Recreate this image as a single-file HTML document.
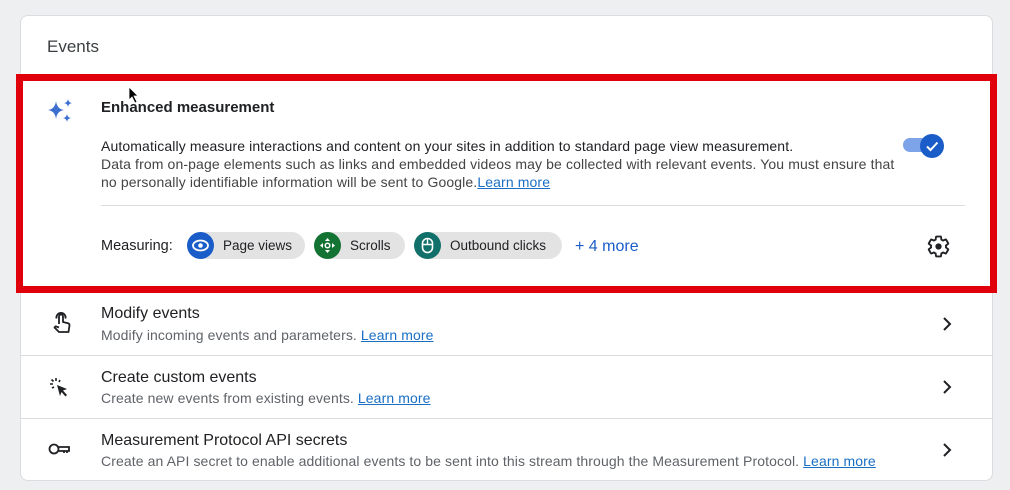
<!DOCTYPE html>
<html><head><style>
*{margin:0;padding:0;box-sizing:border-box}
body{width:1010px;height:490px;background:#eeeff0;font-family:"Liberation Sans",Arial,sans-serif;position:relative;overflow:hidden;color:#202124}
.card{position:absolute;left:20px;top:15px;width:973px;height:466px;background:#fff;border:1px solid #dadce0;border-radius:8px}
.t{position:absolute;white-space:nowrap}
.red{position:absolute;left:16px;top:74px;width:981px;height:219px;border:7px solid #e0000b;background:#fff}
.hr{position:absolute;height:1px;background:#dadce0}
.chip{position:absolute;top:232px;height:27px;border-radius:14px;background:#e3e3e3;font-size:13px;color:#202124}
.chip .ic{position:absolute;left:0;top:0;width:27px;height:27px;border-radius:50%}
.chip span{position:absolute;top:6px}
a{color:#1a6fc4;text-decoration:underline}
.ttl{font-size:16px;color:#202124}
.sub{font-size:14px;color:#5f6368;letter-spacing:0.1px}
.d{font-size:14px;letter-spacing:0.12px}
</style></head><body>
<div class="card"></div>
<div class="t" style="left:47px;top:37px;font-size:17px;color:#3c4043">Events</div>
<div class="red"></div>
<svg class="t" style="left:47px;top:98px" width="28" height="28" viewBox="0 0 28 28"><path d="M9 3 Q10 11 17 12 Q10 13 9 21 Q8 13 1 12 Q8 11 9 3Z" fill="#3c6fd0"/><path d="M21 1 Q21.5 4.5 25 5 Q21.5 5.5 21 9 Q20.5 5.5 17 5 Q20.5 4.5 21 1Z" fill="#3c6fd0"/><path d="M20 16 Q20.5 19.5 24 20 Q20.5 20.5 20 24 Q19.5 20.5 16 20 Q19.5 19.5 20 16Z" fill="#3c6fd0"/></svg>
<div class="t" style="left:101px;top:99px;font-size:15px;font-weight:bold;color:#202124">Enhanced measurement</div>
<div class="t d" style="left:101px;top:138px;color:#202124">Automatically measure interactions and content on your sites in addition to standard page view measurement.</div>
<div class="t d" style="left:101px;top:156px;color:#444">Data from on-page elements such as links and embedded videos may be collected with relevant events. You must ensure that</div>
<div class="t d" style="left:101px;top:174px;color:#444">no personally identifiable information will be sent to Google.<a>Learn more</a></div>
<div class="t" style="left:903px;top:138px;width:34px;height:14px;border-radius:7px;background:#7da4e8"></div>
<div class="t" style="left:920px;top:134px;width:24px;height:24px;border-radius:50%;background:#1a5dc8"></div>
<svg class="t" style="left:920px;top:134px" width="24" height="24"><path d="M7 12.5 L10.5 16 L17.5 8.5" stroke="#fff" stroke-width="2" fill="none"/></svg>
<div class="hr" style="left:101px;top:205px;width:864px"></div>
<div class="t" style="left:101px;top:238px;font-size:14.5px">Measuring:</div>
<div class="chip" style="left:187px;width:118px"><div class="ic" style="background:#1a5dc8"></div>
<svg class="t" style="left:4px;top:6px" width="19" height="15"><ellipse cx="9.5" cy="7.5" rx="7.5" ry="5" stroke="#fff" stroke-width="1.8" fill="none"/><circle cx="9.5" cy="7.5" r="2.3" fill="#fff"/></svg><span style="left:36px;font-size:13.5px">Page views</span></div>
<div class="chip" style="left:314px;width:91px"><div class="ic" style="background:#137333"></div>
<svg class="t" style="left:5px;top:5px" width="17" height="17"><path d="M8.5 1 L11 4 H6Z M8.5 16 L11 13 H6Z M1 8.5 L4 6 V11Z M16 8.5 L13 6 V11Z" fill="#fff"/><circle cx="8.5" cy="8.5" r="2.3" stroke="#fff" stroke-width="1.5" fill="none"/></svg><span style="left:36px;font-size:13.5px">Scrolls</span></div>
<div class="chip" style="left:414px;width:148px"><div class="ic" style="background:#12706b"></div>
<svg class="t" style="left:7px;top:5px" width="13" height="17"><rect x="1.5" y="1.5" width="10" height="14" rx="5" stroke="#fff" stroke-width="1.6" fill="none"/><path d="M6.5 2 V7.5 M2 7.5 H11" stroke="#fff" stroke-width="1.4"/></svg><span style="left:36px;font-size:13.5px">Outbound clicks</span></div>
<div class="t" style="left:575px;top:238px;font-size:16px;color:#1a5dc8">+ 4 more</div>
<svg class="t" style="left:926px;top:234px" width="25" height="25" viewBox="0 0 24 24"><path d="M19.14 12.94c.04-.3.06-.61.06-.94 0-.32-.02-.64-.07-.94l2.03-1.58a.49.49 0 0 0 .12-.61l-1.920-3.32a.488.488 0 0 0-.59-.22l-2.39.96c-.5-.38-1.03-.7-1.62-.94l-.36-2.54a.484.484 0 0 0-.48-.41h-3.840c-.24 0-.43.17-.47.41l-.36 2.54c-.59.24-1.13.57-1.62.94l-2.39-.96c-.22-.08-.47 0-.59.22L2.74 8.87c-.12.21-.08.47.12.61l2.03 1.58c-.05.3-.09.63-.09.94s.02.64.07.94l-2.03 1.58a.49.49 0 0 0-.12.61l1.92 3.32c.12.22.37.29.59.22l2.39-.96c.5.38 1.03.7 1.62.94l.36 2.54c.05.24.24.41.48.41h3.84c.24 0 .44-.17.47-.41l.36-2.540c.59-.24 1.13-.56 1.62-.94l2.39.96c.22.08.47 0 .59-.22l1.92-3.32c.12-.22.07-.47-.12-.61l-2.01-1.58z" fill="none" stroke="#202124" stroke-width="1.8"/><circle cx="12" cy="12" r="3" fill="#202124"/></svg>

<div class="t ttl" style="left:101px;top:305px">Modify events</div>
<div class="t sub" style="left:101px;top:327px">Modify incoming events and parameters. <a>Learn more</a></div>
<svg class="t" style="left:50px;top:310px" width="22" height="26" viewBox="0 0 22 26"><path d="M9 14 V6.5 a2 2 0 0 1 4 0 V12 l5 1.2 a2 2 0 0 1 1.5 2.2 L18.5 22 H9 L4.5 17.5 l1.2-1.2 L9 17.5" fill="none" stroke="#202124" stroke-width="1.8" stroke-linejoin="round"/><path d="M6.5 8.5 a4.6 4.6 0 1 1 9 0" fill="none" stroke="#202124" stroke-width="1.8"/></svg>
<svg class="t" style="left:941px;top:316px" width="12" height="16"><path d="M3 2 L9 8 L3 14" stroke="#202124" stroke-width="2" fill="none"/></svg>
<div class="hr" style="left:20px;top:355px;width:973px"></div>
<div class="t ttl" style="left:101px;top:369px">Create custom events</div>
<div class="t sub" style="left:101px;top:390px">Create new events from existing events. <a>Learn more</a></div>
<svg class="t" style="left:48px;top:376px" width="22" height="22"><path d="M9 9 L19 13 L15 14.5 L19 19 L17.5 20.5 L13.5 16 L12 20Z" fill="#202124"/><path d="M8 2 V5 M2 8 H5 M3.5 3.5 L5.5 5.5 M12 4 L11 6 M4 12 L6 11" stroke="#202124" stroke-width="1.6"/></svg>
<svg class="t" style="left:941px;top:379px" width="12" height="16"><path d="M3 2 L9 8 L3 14" stroke="#202124" stroke-width="2" fill="none"/></svg>
<div class="hr" style="left:20px;top:418px;width:973px"></div>
<div class="t ttl" style="left:101px;top:432px">Measurement Protocol API secrets</div>
<div class="t sub" style="left:101px;top:453px">Create an API secret to enable additional events to be sent into this stream through the Measurement Protocol. <a>Learn more</a></div>
<svg class="t" style="left:48px;top:441px" width="24" height="16"><circle cx="6" cy="8" r="4.5" stroke="#202124" stroke-width="1.8" fill="none"/><path d="M10.5 6 H21 V10 H19 V12 M16 10 V12 M10.5 10 H21" stroke="#202124" stroke-width="1.8" fill="none"/></svg>
<svg class="t" style="left:941px;top:442px" width="12" height="16"><path d="M3 2 L9 8 L3 14" stroke="#202124" stroke-width="2" fill="none"/></svg>
<svg class="t" style="left:128px;top:86px" width="12" height="18"><path d="M1 1 L1 14 L4 11 L7 17 L9 16 L6 10 L10 10Z" fill="#000" stroke="#fff" stroke-width="0.8"/></svg>
</body></html>
